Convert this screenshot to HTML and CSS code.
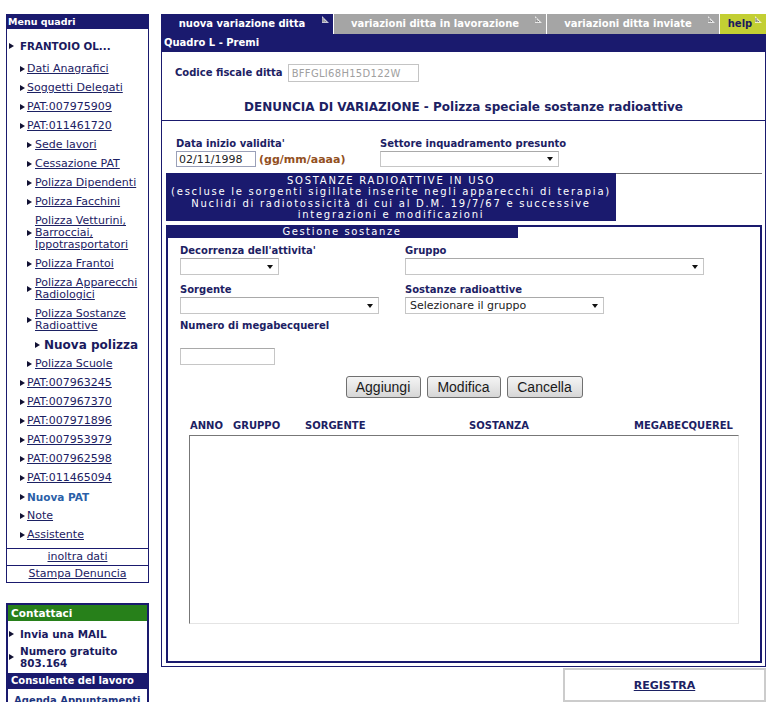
FILE: index.html
```html
<!DOCTYPE html>
<html lang="it">
<head>
<meta charset="utf-8">
<title>Quadro L - Premi</title>
<link rel="stylesheet" href="styles.css">
</head>
<body>
<div class="page">
  <aside class="sidebar">
    <div class="menu">
      <div class="menu-head">Menu quadri</div>
      <ul class="menu-list">
        <li class="item l0 first"><span class="arr"></span><span class="strong">FRANTOIO OL...</span></li>
        <li class="item l1"><span class="arr"></span><a href="#">Dati Anagrafici</a></li>
        <li class="item l1"><span class="arr"></span><a href="#">Soggetti Delegati</a></li>
        <li class="item l1"><span class="arr"></span><a href="#">PAT:007975909</a></li>
        <li class="item l1"><span class="arr"></span><a href="#">PAT:011461720</a></li>
        <li class="item l2"><span class="arr"></span><a href="#">Sede lavori</a></li>
        <li class="item l2"><span class="arr"></span><a href="#">Cessazione PAT</a></li>
        <li class="item l2"><span class="arr"></span><a href="#">Polizza Dipendenti</a></li>
        <li class="item l2"><span class="arr"></span><a href="#">Polizza Facchini</a></li>
        <li class="item l2"><span class="arr"></span><a href="#">Polizza Vetturini,<br>Barrocciai,<br>Ippotrasportatori</a></li>
        <li class="item l2"><span class="arr"></span><a href="#">Polizza Frantoi</a></li>
        <li class="item l2"><span class="arr"></span><a href="#">Polizza Apparecchi<br>Radiologici</a></li>
        <li class="item l2"><span class="arr"></span><a href="#">Polizza Sostanze<br>Radioattive</a></li>
        <li class="item l3"><span class="arr"></span><span class="big">Nuova polizza</span></li>
        <li class="item l2"><span class="arr"></span><a href="#">Polizza Scuole</a></li>
        <li class="item l1"><span class="arr"></span><a href="#">PAT:007963245</a></li>
        <li class="item l1"><span class="arr"></span><a href="#">PAT:007967370</a></li>
        <li class="item l1"><span class="arr"></span><a href="#">PAT:007971896</a></li>
        <li class="item l1"><span class="arr"></span><a href="#">PAT:007953979</a></li>
        <li class="item l1"><span class="arr"></span><a href="#">PAT:007962598</a></li>
        <li class="item l1"><span class="arr"></span><a href="#">PAT:011465094</a></li>
        <li class="item l1"><span class="arr"></span><span class="blue">Nuova PAT</span></li>
        <li class="item l1"><span class="arr"></span><a href="#">Note</a></li>
        <li class="item l1"><span class="arr"></span><a href="#">Assistente</a></li>
      </ul>
      <div class="menu-foot"><a href="#">inoltra dati</a></div>
      <div class="menu-foot"><a href="#">Stampa Denuncia</a></div>
    </div>

    <div class="contact">
      <div class="contact-head green">Contattaci</div>
      <ul class="contact-list">
        <li class="citem"><span class="arr"></span><span>Invia una MAIL</span></li>
        <li class="citem"><span class="arr"></span><span>Numero gratuito<br>803.164</span></li>
      </ul>
      <div class="contact-head navy">Consulente del lavoro</div>
      <div class="agenda">Agenda Appuntamenti</div>
    </div>
  </aside>

  <main class="main">
    <nav class="tabs">
      <div class="tab active">nuova variazione ditta<svg class="tab-ico" width="7" height="7" viewBox="0 0 7 7"><path d="M0 0 L0 7 L7 7 Z" fill="#c8c8d8"/><path d="M1 2 L1 6 M2 4 L2 6 M3 5 L4 6" stroke="#888" stroke-width="1"/></svg></div>
      <div class="tab grey wide">variazioni ditta in lavorazione<svg class="tab-ico" width="7" height="7" viewBox="0 0 7 7"><path d="M0 0 L0 7 L7 7 Z" fill="#e8e8e8"/><path d="M1 2 L1 6 M2 4 L2 6 M3 5 L4 6" stroke="#777" stroke-width="1"/></svg></div>
      <div class="tab grey">variazioni ditta inviate<svg class="tab-ico" width="7" height="7" viewBox="0 0 7 7"><path d="M0 0 L0 7 L7 7 Z" fill="#e8e8e8"/><path d="M1 2 L1 6 M2 4 L2 6 M3 5 L4 6" stroke="#777" stroke-width="1"/></svg></div>
      <div class="tab help">help<svg class="tab-ico" width="7" height="7" viewBox="0 0 7 7"><path d="M0 0 L0 7 L7 7 Z" fill="#eef0c0"/><path d="M1 2 L1 6 M2 4 L2 6 M3 5 L4 6" stroke="#777" stroke-width="1"/></svg></div>
    </nav>

    <section class="quadro">
      <div class="quadro-head">Quadro L - Premi</div>

      <div class="top">
        <div class="cf-row">
          <span class="lbl">Codice fiscale ditta</span>
          <input class="cf-input" type="text" value="BFFGLI68H15D122W" readonly>
        </div>
        <h1 class="title">DENUNCIA DI VARIAZIONE - Polizza speciale sostanze radioattive</h1>
      </div>

      <div class="dates">
        <div class="dcol date-col">
          <span class="lbl">Data inizio validita'</span>
          <div class="date-line">
            <input class="date-input" type="text" value="02/11/1998">
            <span class="hint">(gg/mm/aaaa)</span>
          </div>
        </div>
        <div class="dcol">
          <span class="lbl">Settore inquadramento presunto</span>
          <div class="sel w179"><span></span><span class="down"></span></div>
        </div>
      </div>

      <div class="banner-row">
        <div class="banner">SOSTANZE RADIOATTIVE IN USO<br>(escluse le sorgenti sigillate inserite negli apparecchi di terapia)<br>Nuclidi di radiotossicità di cui al D.M. 19/7/67 e successive<br>integrazioni e modificazioni</div>
        <div class="banner-line"></div>
      </div>

      <div class="gest">
        <div class="gest-head">Gestione sostanze</div>
        <div class="gest-body">
          <div class="frow r1">
            <div class="fcol c1">
              <span class="lbl">Decorrenza dell'attivita'</span>
              <div class="sel w99"><span></span><span class="down"></span></div>
            </div>
            <div class="fcol">
              <span class="lbl">Gruppo</span>
              <div class="sel w299"><span></span><span class="down"></span></div>
            </div>
          </div>
          <div class="frow r2">
            <div class="fcol c1">
              <span class="lbl">Sorgente</span>
              <div class="sel w199"><span></span><span class="down"></span></div>
            </div>
            <div class="fcol">
              <span class="lbl">Sostanze radioattive</span>
              <div class="sel w199"><span>Selezionare il gruppo</span><span class="down"></span></div>
            </div>
          </div>
          <div class="frow r3">
            <div class="fcol">
              <span class="lbl">Numero di megabecquerel</span>
              <input class="mbq" type="text">
            </div>
          </div>

          <div class="buttons">
            <button class="btn b-agg" type="button">Aggiungi</button>
            <button class="btn b-mod" type="button">Modifica</button>
            <button class="btn b-can" type="button">Cancella</button>
          </div>

          <div class="thead">
            <span class="th t-anno">ANNO</span>
            <span class="th t-gruppo">GRUPPO</span>
            <span class="th t-sorg">SORGENTE</span>
            <span class="th t-sost">SOSTANZA</span>
            <span class="th t-mbq">MEGABECQUEREL</span>
          </div>
          <div class="tbox"></div>
        </div>
      </div>
    </section>

    <div class="reg-row">
      <div class="reg"><a href="#">REGISTRA</a></div>
    </div>
  </main>
</div>
</body>
</html>
```

FILE: styles.css
```css
html, body {
  margin: 0;
  padding: 0;
  overflow: hidden;
  background: #ffffff;
}

body {
  font-family: "DejaVu Sans", Verdana, sans-serif;
  font-size: 11px;
  color: #1c2163;
}

.page {
  display: flex;
  align-items: flex-start;
  padding-top: 14px;
}

/* ---------- sidebar ---------- */
.sidebar {
  width: 143px;
  margin-left: 6px;
  display: flex;
  flex-direction: column;
}

.menu {
  border: 1px solid #1a1a6e;
  border-top: 0;
}

.menu-head {
  background: #1a1a6e;
  color: #ffffff;
  font-weight: bold;
  font-size: 9.5px;
  height: 15px;
  line-height: 15px;
  padding-left: 1px;
}

.menu-list {
  list-style: none;
  margin: 0;
  padding: 7px 0 4px 0;
}

.item {
  display: flex;
  align-items: center;
  padding: 4px 0 3px 0;
  line-height: 12px;
}

.item a {
  color: #1c2163;
  text-decoration: underline;
}

.arr {
  flex-shrink: 0;
  width: 0;
  height: 0;
  border-left: 5px solid #111133;
  border-top: 3px solid transparent;
  border-bottom: 3px solid transparent;
}

.l0 { padding-left: 2px; }
.l0 .arr { margin-right: 6px; }
.l1 { padding-left: 13px; }
.l1 .arr { margin-right: 2px; }
.l2 { padding-left: 20px; }
.l2 .arr { margin-right: 3px; }
.l3 { padding-left: 28px; }
.l3 .arr { margin-right: 4px; }

.first { margin-bottom: 4px; }

.strong {
  font-weight: bold;
  font-size: 10.3px;
  color: #1a1a5e;
}

.big {
  font-weight: bold;
  font-size: 12px;
  color: #1a1a5e;
}

.blue {
  font-weight: bold;
  font-size: 10.5px;
  color: #2b5fa8;
}

.menu-foot {
  border-top: 1px solid #1a1a6e;
  height: 16px;
  line-height: 16px;
  text-align: center;
}

.menu-foot a {
  color: #1c2163;
}

.contact {
  margin-top: 20px;
  border: 2px solid #1a1a6e;
  border-bottom: 0;
  width: 139px;
}

.contact-head {
  color: #ffffff;
  font-weight: bold;
  font-size: 10px;
  height: 16px;
  line-height: 16px;
  padding-left: 3px;
}

.contact-head.green {
  background: #27801a;
  font-size: 10.5px;
}
.contact-head.navy { background: #1a1a6e; }

.contact-list {
  list-style: none;
  margin: 0;
  padding: 3px 0 2px 1px;
}

.citem {
  display: flex;
  align-items: center;
  padding: 4px 0 3px 0;
  line-height: 12px;
  font-weight: bold;
  font-size: 10.4px;
  color: #1a1a5e;
}

.citem + .citem {
  padding: 2px 0 2px 0;
}

.citem .arr { margin-right: 6px; }

.agenda {
  font-weight: bold;
  font-size: 10px;
  color: #1d3580;
  padding: 6px 0 0 6px;
  line-height: 12px;
  white-space: nowrap;
}

/* ---------- main ---------- */
.main {
  width: 605px;
  margin-left: 12px;
  display: flex;
  flex-direction: column;
}

.tabs {
  display: flex;
  gap: 1px;
  height: 20px;
}

.tab {
  position: relative;
  width: 172px;
  height: 20px;
  line-height: 20px;
  font-size: 10px;
  font-weight: bold;
  color: #ffffff;
  text-align: center;
  padding-right: 10px;
  box-sizing: border-box;
}

.tab.active { background: #1a1a6e; }
.tab.grey { background: #a5a5a5; }
.tab.wide { width: 212px; }
.tab.help {
  width: 46px;
  background: #c3cf33;
  color: #1a1a5e;
  padding-right: 6px;
}

.tab-ico {
  position: absolute;
  top: 2px;
  right: 4px;
}

.quadro {
  border: 1px solid #1a1a6e;
  border-top: 0;
}

.quadro-head {
  background: #1a1a6e;
  color: #ffffff;
  font-weight: bold;
  font-size: 10px;
  height: 18px;
  line-height: 18px;
  padding-left: 2px;
}

.lbl {
  font-weight: bold;
  font-size: 10px;
  line-height: 12px;
  color: #1c2163;
  display: block;
}

.top {
  padding: 12px 0 5px 13px;
  border-bottom: 1px solid #1a1a6e;
}

.cf-row {
  display: flex;
  align-items: center;
}

.cf-input {
  margin-left: 5px;
  width: 131px;
  height: 18px;
  box-sizing: border-box;
  border: 1px solid #c4c4c4;
  font-family: "DejaVu Sans", Verdana, sans-serif;
  font-size: 10px;
  color: #a0a0a0;
  padding: 0 3px;
  letter-spacing: 0.3px;
}

.title {
  margin: 17px 0 0 -13px;
  font-size: 12px;
  line-height: 16px;
  font-weight: bold;
  text-align: center;
  color: #1c2163;
}

.dates {
  display: flex;
  padding: 17px 0 0 14px;
}

.date-col { width: 204px; }

.dcol .lbl { margin-bottom: 1px; }

.date-line {
  display: flex;
  align-items: center;
}

.date-input {
  width: 80px;
  height: 16px;
  box-sizing: border-box;
  border: 1px solid #9aa0b8;
  font-family: "DejaVu Sans", Verdana, sans-serif;
  font-size: 11px;
  color: #222222;
  padding: 0 2px;
}

.hint {
  margin-left: 3px;
  font-weight: bold;
  color: #93501e;
}

.sel {
  display: flex;
  align-items: center;
  justify-content: space-between;
  height: 17px;
  box-sizing: border-box;
  border: 1px solid #c6c6c6;
  border-top-color: #a9a9a9;
  background: #ffffff;
  padding: 0 5px 0 4px;
  font-size: 11px;
  color: #222222;
}

.down {
  width: 0;
  height: 0;
  border-top: 4px solid #111111;
  border-left: 3.5px solid transparent;
  border-right: 3.5px solid transparent;
}

.w179 { width: 179px; height: 16px; }
.w99 { width: 99px; }
.w199 { width: 199px; }
.w299 { width: 299px; }

.banner-row {
  display: flex;
  align-items: flex-start;
  margin: 6px 3px 0 4px;
}

.banner {
  width: 450px;
  background: #1a1a6e;
  color: #ffffff;
  font-size: 10px;
  letter-spacing: 1.75px;
  line-height: 11.4px;
  text-align: center;
  padding: 2px 0 0.4px 0;
  white-space: nowrap;
}

.banner-line {
  flex: 1;
  border-top: 1px solid #777777;
}

.gest {
  margin: 4px 3px 3px 4px;
  border: 2px solid #1a1a6e;
}

.gest-head {
  margin: -2px 0 0 -2px;
  width: 352px;
  height: 13px;
  line-height: 13px;
  background: #1a1a6e;
  color: #ffffff;
  font-size: 10px;
  letter-spacing: 1.6px;
  text-align: center;
}

.gest-body {
  padding: 7px 0 37px 12px;
  display: flex;
  flex-direction: column;
}

.frow {
  display: flex;
}

.fcol .lbl { margin-bottom: 1px; }

.c1 { width: 225px; }

.r2 { margin-top: 9px; }
.r3 { margin-top: 6px; }
.r3 .lbl { margin-bottom: 16px; }

.mbq {
  width: 95px;
  height: 17px;
  box-sizing: border-box;
  border: 1px solid #c6c6c6;
  border-top-color: #a9a9a9;
}

.buttons {
  display: flex;
  justify-content: center;
  gap: 6px;
  margin: 11px 0 0 -12px;
}

.btn {
  height: 22px;
  box-sizing: border-box;
  border: 1px solid #707070;
  border-radius: 3px;
  background: linear-gradient(#f4f4f4, #e6e6e6 50%, #d6d6d6);
  font-family: "Liberation Sans", Arial, sans-serif;
  font-size: 14px;
  color: #1a1a1a;
  padding: 0;
}

.b-agg { width: 75px; }
.b-mod { width: 74px; }
.b-can { width: 76px; }

.thead {
  display: flex;
  margin: 22px 0 0 10px;
}

.th {
  font-weight: bold;
  font-size: 10px;
  line-height: 12px;
  color: #1c2163;
}

.t-anno { width: 43px; }
.t-gruppo { width: 72px; }
.t-sorg { width: 164px; }
.t-sost { width: 165px; }

.tbox {
  margin: 3px 0 0 9px;
  width: 550px;
  height: 189px;
  box-sizing: border-box;
  border-top: 1px solid #777777;
  border-left: 1px solid #777777;
  border-right: 1px solid #e4e4e4;
  border-bottom: 1px solid #e4e4e4;
}

.reg-row {
  display: flex;
  justify-content: flex-end;
  margin-top: 1px;
}

.reg {
  width: 203px;
  height: 34px;
  box-sizing: border-box;
  border: 2px solid #cccccc;
  display: flex;
  align-items: center;
  justify-content: center;
}

.reg a {
  font-weight: bold;
  font-size: 11px;
  color: #1c2163;
  text-decoration: underline;
}
```
